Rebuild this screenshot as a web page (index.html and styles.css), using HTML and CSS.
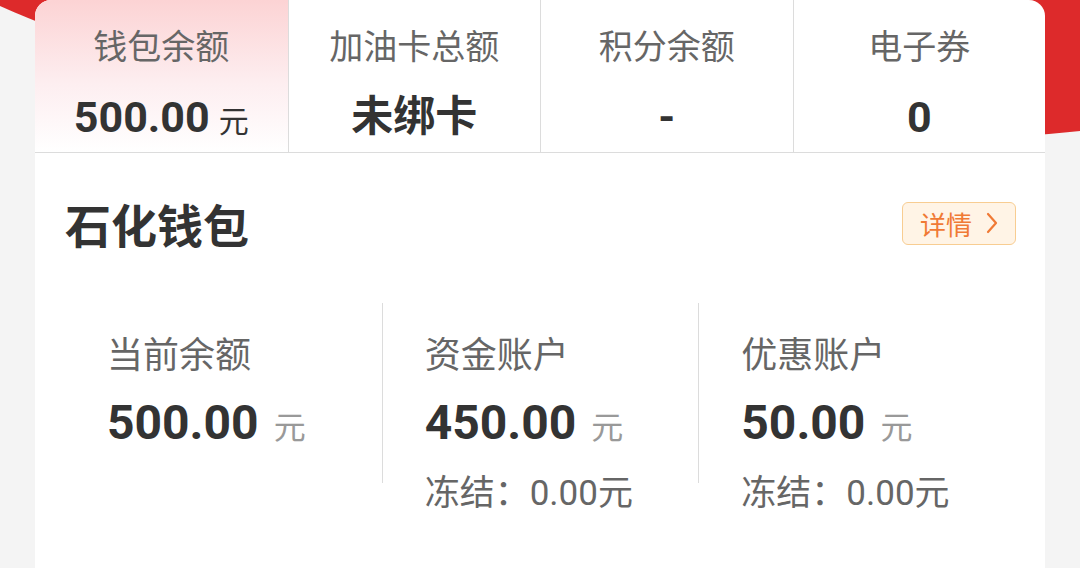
FILE: index.html
```html
<!DOCTYPE html>
<html lang="zh-CN">
<head>
    <meta charset="UTF-8">
    <meta name="viewport" content="width=device-width, initial-scale=1.0">
    <title>石化钱包</title>
    <link rel="stylesheet" href="styles.css">
</head>
<body>
    <div class="page">
        <svg class="header-bg" width="1080" height="200" viewBox="0 0 1080 200" preserveAspectRatio="none">
            <path d="M0 0 L0 6 C300 141 800 160 1080 131 L1080 0 Z" fill="#dd2a2b"/>
        </svg>

        <div class="card">
            <div class="tabs">
                <div class="tab active">
                    <div class="tab-label">钱包余额</div>
                    <div class="tab-value">500.00<span class="tab-unit">元</span></div>
                </div>
                <div class="tab">
                    <div class="tab-label">加油卡总额</div>
                    <div class="tab-value cjk">未绑卡</div>
                </div>
                <div class="tab">
                    <div class="tab-label">积分余额</div>
                    <div class="tab-value">-</div>
                </div>
                <div class="tab">
                    <div class="tab-label">电子券</div>
                    <div class="tab-value">0</div>
                </div>
            </div>

            <div class="wallet">
                <div class="wallet-head">
                    <h2>石化钱包</h2>
                    <button class="detail-btn">详情
                        <svg width="12" height="22" viewBox="0 0 12 22">
                            <path d="M2 2 L10 11 L2 20" fill="none" stroke="#f07a35" stroke-width="2.2" stroke-linecap="round" stroke-linejoin="round"/>
                        </svg>
                    </button>
                </div>

                <div class="stats">
                    <div class="stat">
                        <div class="stat-label">当前余额</div>
                        <div class="stat-value">500.00<span class="unit">元</span></div>
                    </div>
                    <div class="stat">
                        <div class="stat-label">资金账户</div>
                        <div class="stat-value">450.00<span class="unit">元</span></div>
                        <div class="stat-frozen">冻结：0.00元</div>
                    </div>
                    <div class="stat">
                        <div class="stat-label">优惠账户</div>
                        <div class="stat-value">50.00<span class="unit">元</span></div>
                        <div class="stat-frozen">冻结：0.00元</div>
                    </div>
                </div>
            </div>
        </div>
    </div>
</body>
</html>
```

FILE: styles.css
```css
* {
    margin: 0;
    padding: 0;
    box-sizing: border-box;
}

body {
    font-family: Roboto, "Noto Sans CJK SC", sans-serif;
    background: #f4f4f4;
    color: #333;
    overflow: hidden;
}

.page {
    position: relative;
    height: 568px;
}

.header-bg {
    position: absolute;
    top: 0;
    left: 0;
}

.card {
    position: relative;
    margin: 0 35px;
    height: 568px;
    background: white;
    border-radius: 16px 16px 0 0;
    overflow: hidden;
}

.tabs {
    display: grid;
    grid-template-columns: repeat(4, 1fr);
    height: 153px;
    border-bottom: 1px solid #dcdcdc;
}

.tab {
    text-align: center;
    padding-top: 27px;
    border-left: 1px solid #dcdcdc;
}

.tab:first-child {
    border-left: none;
}

.tab.active {
    background: linear-gradient(180deg, #fcd3d4 0%, #fdeef0 55%, #ffffff 100%);
}

.tab-label {
    font-size: 34px;
    line-height: 40px;
    color: #666;
}

.tab-value {
    margin-top: 25px;
    font-size: 43px;
    line-height: 50px;
    font-weight: bold;
    color: #333;
}

.tab-value.cjk {
    font-size: 42px;
}

.tab-unit {
    font-size: 30px;
    font-weight: normal;
    margin-left: 9px;
}

.wallet {
    padding: 0 30px;
}

.wallet-head {
    display: flex;
    align-items: center;
    justify-content: space-between;
    height: 60px;
    margin-top: 40px;
}

.wallet-head h2 {
    font-size: 46px;
    font-weight: bold;
    color: #333;
}

.detail-btn {
    display: flex;
    align-items: center;
    gap: 14px;
    height: 43px;
    padding: 0 17px 0 17px;
    margin-right: -1px;
    background: #fff4e6;
    border: 1px solid #f8cd92;
    border-radius: 6px;
    color: #f07a35;
    font-family: "Noto Sans CJK SC", sans-serif;
    font-size: 26px;
}

.stats {
    display: grid;
    grid-template-columns: repeat(3, 1fr);
    margin-top: 50px;
}

.stat {
    height: 180px;
    padding: 32px 0 0 42px;
    border-left: 1px solid #dcdcdc;
    white-space: nowrap;
}

.stat:first-child {
    border-left: none;
}

.stat-label {
    font-size: 36px;
    line-height: 42px;
    color: #666;
}

.stat-value {
    margin-top: 18px;
    font-size: 48px;
    line-height: 56px;
    font-weight: bold;
    color: #333;
}

.unit {
    font-size: 32px;
    font-weight: normal;
    color: #999;
    margin-left: 15px;
}

.stat-frozen {
    margin-top: 17px;
    font-size: 35px;
    line-height: 42px;
    color: #666;
}
```
